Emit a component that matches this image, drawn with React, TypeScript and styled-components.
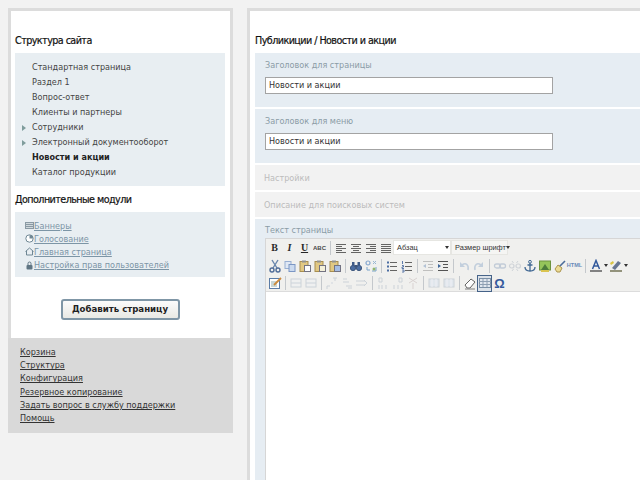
import React from 'react';
import styled, { createGlobalStyle } from 'styled-components';

const GlobalStyle = createGlobalStyle`
  html, body { margin: 0; padding: 0; height: 480px; overflow: hidden; background: #f2f2f2; }
  body { font-family: "DejaVu Sans", Verdana, sans-serif; font-size: 8.1px; color: #333; }
`;

const Page = styled.div`
  display: flex;
  gap: 14px;
  width: 640px;
  height: 480px;
  padding: 8px 0 0 8px;
  box-sizing: border-box;
  overflow: hidden;
`;

const Sidebar = styled.div`
  width: 225px;
  flex: none;
`;

const SidePanel = styled.div`
  height: 330px;
  box-sizing: border-box;
  background: #fff;
  border: solid #dcdcdc;
  border-width: 3px 3px 0 3px;
  padding: 23px 5px 0 4px;
`;

const Heading = styled.h2`
  margin: 0;
  height: 19px;
  line-height: 14px;
  font-size: 9.6px;
  font-weight: normal;
  color: #111;
  letter-spacing: -0.55px;
  -webkit-text-stroke: 0.2px #111;
`;

const TreeBox = styled.div`
  background: #e8eef2;
  padding: 7px 0 6px 17px;
  margin-bottom: 7px;
`;

const TreeRow = styled.div<{ $active?: boolean; $arrow?: boolean }>`
  position: relative;
  height: 15px;
  line-height: 15px;
  font-weight: ${p => (p.$active ? 'bold' : 'normal')};
  color: ${p => (p.$active ? '#222' : '#444')};
  &::before {
    content: '';
    display: ${p => (p.$arrow ? 'block' : 'none')};
    position: absolute;
    left: -10px;
    top: 5px;
    border-left: 4px solid #7f9c9c;
    border-top: 3px solid transparent;
    border-bottom: 3px solid transparent;
  }
`;

const ModulesBox = styled.div`
  background: #e8eef2;
  margin-top: 0;
  padding: 7px 0 5px 10px;
`;

const ModuleRow = styled.div`
  display: flex;
  align-items: center;
  height: 13.2px;
`;

const ModuleLink = styled.a`
  color: #7c95a6;
  text-decoration: underline;
`;

const ButtonRow = styled.div`
  display: flex;
  justify-content: center;
  margin-top: 22px;
`;

const AddButton = styled.button`
  width: 119px;
  height: 21px;
  padding: 0;
  box-sizing: border-box;
  border: 2px solid #7f96a6;
  border-radius: 3px;
  background: linear-gradient(#fbfbfb, #e9e9e4);
  font-family: inherit;
  font-size: 8.6px;
  font-weight: bold;
  color: #222;
`;

const SideFooter = styled.div`
  height: 95px;
  box-sizing: border-box;
  background: #d9d9d9;
  padding: 8px 0 0 12px;
`;

const FooterLink = styled.a`
  display: block;
  height: 13.2px;
  line-height: 13px;
  color: #333;
  text-decoration: underline;
`;

const Main = styled.div`
  flex: none;
  width: 420px;
  height: 480px;
  box-sizing: border-box;
  background: #fff;
  border: solid #dcdcdc;
  border-width: 3px 0 0 3px;
  padding: 23px 0 0 5px;
`;

const Section = styled.div<{ $h: number; $muted?: boolean }>`
  height: ${p => p.$h}px;
  box-sizing: border-box;
  margin-bottom: 2px;
  background: ${p => (p.$muted ? '#f2f2f2' : '#e6edf3')};
  padding: ${p => (p.$muted ? '7px 0 0 9px' : '6px 0 0 10px')};
`;

const EditorSection = styled(Section)`
  padding-top: 5px;
`;

const Label = styled.div<{ $muted?: boolean }>`
  height: 12px;
  line-height: 12px;
  color: ${p => (p.$muted ? '#bcbcbc' : '#8b9ca6')};
`;

const TextInput = styled.div`
  width: 288px;
  height: 17px;
  margin-top: 6px;
  box-sizing: border-box;
  border: 1px solid #a3a3a3;
  background: #fff;
  padding-left: 3px;
  line-height: 15px;
  color: #333;
`;

const Editor = styled.div`
  margin-top: 2px;
  width: 380px;
  height: 260px;
  border: 1px solid #d6d6d6;
  border-right: 0;
  background: #fff;
`;

const Toolbar = styled.div`
  height: 52px;
  background: #f0f0ee;
  border-bottom: 1px solid #dcdcdc;
  padding-left: 1px;
`;

const ToolRow = styled.div`
  display: flex;
  align-items: center;
  height: 17.7px;
`;

const ToolButton = styled.span<{ $active?: boolean; $off?: boolean }>`
  position: relative;
  width: 15px;
  height: 15px;
  flex: none;
  display: flex;
  align-items: center;
  justify-content: center;
  opacity: ${p => (p.$off ? 0.4 : 0.9)};
  &::after {
    content: '';
    display: ${p => (p.$active ? 'block' : 'none')};
    position: absolute;
    inset: -1px 0;
    border: 1px solid #35557f;
    background: rgba(178, 198, 224, 0.35);
  }
`;

const ToolSep = styled.span`
  width: 1px;
  height: 14px;
  margin: 0 2.5px;
  flex: none;
  background: #c4c8cc;
`;

const ToolSelect = styled.span<{ $w: number; $grey?: boolean }>`
  display: flex;
  align-items: center;
  justify-content: space-between;
  width: ${p => p.$w}px;
  height: 15px;
  box-sizing: border-box;
  flex: none;
  padding: 0 1px 0 3px;
  background: ${p => (p.$grey ? '#f5f5f3' : '#fff')};
  border: 1px solid #e6e6e2;
  font-family: "Liberation Sans", Arial, sans-serif;
  font-size: 7.4px;
  color: #333;
  white-space: nowrap;
`;

const Caret = styled.span`
  width: 0;
  height: 0;
  flex: none;
  border-top: 3px solid #333;
  border-left: 2.5px solid transparent;
  border-right: 2.5px solid transparent;
`;

const ArrowBtn = styled.span`
  width: 5px;
  flex: none;
  display: flex;
  justify-content: center;
`;

const Glyph = styled.span<{ $serif?: boolean; $italic?: boolean; $under?: boolean; $c?: string; $s?: number }>`
  font-family: ${p => (p.$serif ? '"Liberation Serif", serif' : '"Liberation Sans", sans-serif')};
  font-size: ${p => p.$s ?? 10}px;
  font-weight: bold;
  font-style: ${p => (p.$italic ? 'italic' : 'normal')};
  text-decoration: ${p => (p.$under ? 'underline' : 'none')};
  color: ${p => p.$c ?? '#111'};
  line-height: 1;
`;

const Svg = ({ children }: { children: React.ReactNode }) => (
  <svg width="14" height="14" viewBox="0 0 14 14" fill="none" style={{ position: 'relative', zIndex: 1 }}>
    {children}
  </svg>
);

const lines = (rows: [number, number, number][], color: string, w = 1) =>
  rows.map(([x1, x2, y], i) => <line key={i} x1={x1} x2={x2} y1={y} y2={y} stroke={color} strokeWidth={w} />);

const alignIcon = (kind: string) => {
  const rows: [number, number, number][] = [];
  for (let i = 0; i < 5; i++) {
    const y = 3 + i * 2 + 0.5;
    const short = i % 2 === 1;
    if (kind === 'full' || !short) rows.push([2, 12, y]);
    else if (kind === 'left') rows.push([2, 8, y]);
    else if (kind === 'center') rows.push([4, 10, y]);
    else rows.push([6, 12, y]);
  }
  return <Svg>{lines(rows, '#555')}</Svg>;
};

const Paste = ({ doc }: { doc: string }) => (
  <Svg>
    <rect x="2" y="2.5" width="8" height="10" fill="#e0c478" stroke="#a08440" />
    <rect x="4" y="1.5" width="4" height="2" fill="#888" />
    <rect x="6.5" y="6.5" width="6" height="6" fill={doc} stroke="#667" />
  </Svg>
);

const icons: Record<string, React.ReactNode> = {
  left: alignIcon('left'),
  center: alignIcon('center'),
  right: alignIcon('right'),
  full: alignIcon('full'),
  cut: (
    <Svg>
      <path d="M4 1l5 8M10 1L5 9" stroke="#5a7aa6" strokeWidth="1.4" />
      <circle cx="4" cy="11" r="2" stroke="#3f5f90" strokeWidth="1.4" />
      <circle cx="10" cy="11" r="2" stroke="#3f5f90" strokeWidth="1.4" />
    </Svg>
  ),
  copy: (
    <Svg>
      <rect x="2" y="2.5" width="6" height="7" fill="#dfe8f5" stroke="#8fa9d0" />
      <rect x="6" y="5.5" width="6" height="7" fill="#c8d8f0" stroke="#6f8dc0" />
    </Svg>
  ),
  paste: <Paste doc="#fff" />,
  pasteText: <Paste doc="#f4f0d8" />,
  pasteWord: <Paste doc="#9db8e4" />,
  find: (
    <Svg>
      <circle cx="4" cy="9" r="2.6" fill="#3a5f9a" stroke="#2a4570" />
      <circle cx="10" cy="9" r="2.6" fill="#3a5f9a" stroke="#2a4570" />
      <rect x="3" y="3" width="2.5" height="4" fill="#2b4a7c" />
      <rect x="8.5" y="3" width="2.5" height="4" fill="#2b4a7c" />
      <rect x="5.5" y="6" width="3" height="2" fill="#2a4570" />
    </Svg>
  ),
  replace: (
    <Svg>
      <circle cx="4" cy="4" r="2" stroke="#7aa0cc" strokeWidth="1.2" />
      <path d="M9 2l3 3M12 2L9 5" stroke="#8fb0d0" />
      <path d="M3 8v3h3M8 12h4V8" stroke="#6f9cc8" />
      <circle cx="10" cy="10" r="1.5" fill="#88b060" />
    </Svg>
  ),
  ul: (
    <Svg>
      {lines([[5, 12, 3.5], [5, 12, 7.5], [5, 12, 11.5]], '#555')}
      {lines([[2, 4, 3.5], [2, 4, 7.5], [2, 4, 11.5]], '#3a5f9a', 2)}
    </Svg>
  ),
  ol: (
    <Svg>
      {lines([[5, 12, 3.5], [5, 12, 7.5], [5, 12, 11.5]], '#555')}
      <path d="M2.5 2v3M2 6.5h1.5v1.5H2v1.5h2M2 11h2v2H2" stroke="#3a5f9a" strokeWidth="0.9" />
    </Svg>
  ),
  outdent: (
    <Svg>
      {lines([[2, 12, 2.5], [7, 12, 5.5], [7, 12, 8.5], [2, 12, 11.5]], '#777')}
      <path d="M5 5v4L2 7z" fill="#5a7fb0" />
    </Svg>
  ),
  indent: (
    <Svg>
      {lines([[2, 12, 2.5], [7, 12, 5.5], [7, 12, 8.5], [2, 12, 11.5]], '#444')}
      <path d="M2 5v4l3-2z" fill="#2f5a90" />
    </Svg>
  ),
  undo: (
    <Svg>
      <path d="M5 6c4-3 7 0 6 5" stroke="#7f9fc4" strokeWidth="1.6" />
      <path d="M3 3v5h5z" fill="#7f9fc4" />
    </Svg>
  ),
  redo: (
    <Svg>
      <path d="M9 6c-4-3-7 0-6 5" stroke="#7f9fc4" strokeWidth="1.6" />
      <path d="M11 3v5H6z" fill="#7f9fc4" />
    </Svg>
  ),
  link: (
    <Svg>
      <rect x="1.5" y="5" width="6" height="4" rx="2" stroke="#8098b8" strokeWidth="1.3" />
      <rect x="6.5" y="5" width="6" height="4" rx="2" stroke="#8098b8" strokeWidth="1.3" />
    </Svg>
  ),
  unlink: (
    <Svg>
      <rect x="1.5" y="5" width="4.5" height="4" rx="2" stroke="#a0aab8" strokeWidth="1.2" />
      <rect x="8" y="5" width="4.5" height="4" rx="2" stroke="#a0aab8" strokeWidth="1.2" />
      <path d="M4 2l1.5 2M10 2L8.500 4M4 12l1.5-2M10 12l-1.5-2" stroke="#a0aab8" />
    </Svg>
  ),
  anchor: (
    <Svg>
      <circle cx="7" cy="2.8" r="1.4" stroke="#2f5a8a" />
      <path d="M7 4v8M4.5 6h5M2 8c0 3 2.5 4 5 4s5-1 5-4" stroke="#2f5a8a" strokeWidth="1.3" />
    </Svg>
  ),
  image: (
    <Svg>
      <rect x="1.5" y="2" width="11" height="9" fill="#8cc04a" stroke="#5e8a2c" />
      <path d="M3 11l4-6 4 6z" fill="#3c7028" />
      <rect x="3" y="11" width="8" height="2" fill="#d8c040" />
    </Svg>
  ),
  clean: (
    <Svg>
      <path d="M6 8l6-6" stroke="#3c5f90" strokeWidth="1.6" />
      <path d="M2 10l3-4 4 3-2 4H4z" fill="#ecd98a" stroke="#a68b3c" />
    </Svg>
  ),
  html: <Glyph $c="#5a7eb4" $s={5.5}>HTML</Glyph>,
  color: (
    <Svg>
      <path d="M3.5 10L7 1.5 10.500 10M5 7h4" stroke="#1f4a94" strokeWidth="1.5" />
      <rect x="1" y="11" width="12" height="2" fill="#777" />
    </Svg>
  ),
  highlight: (
    <Svg>
      <path d="M3 9l6-7 3 2-6 7z" fill="#5a6a88" />
      <path d="M1 4l3-2 1 2-3 2z" fill="#d8c030" />
      <rect x="1" y="11" width="12" height="2" fill="#8a8a70" />
    </Svg>
  ),
  edit: (
    <Svg>
      <rect x="1.500" y="2.500" width="10" height="10" fill="#fff" stroke="#4a70a0" />
      {lines([[3, 9, 6], [3, 9, 8], [3, 9, 10]], '#8aa')}
      <path d="M6 9l7-7" stroke="#c8802c" strokeWidth="1.8" />
    </Svg>
  ),
  rowA: (
    <Svg>
      <rect x="2" y="3" width="10" height="8" fill="#eef1f5" stroke="#9ab" />
      <line x1="2" x2="12" y1="7" y2="7" stroke="#9ab" />
    </Svg>
  ),
  cellA: (
    <Svg>
      <path d="M2 10v3M2 10h3" stroke="#9ab" />
      <path d="M8 2h4M10 2v3" stroke="#9ab" />
      <circle cx="7" cy="7" r="1" fill="#bcc8d4" />
    </Svg>
  ),
  cellB: (
    <Svg>
      <path d="M3 3h4M3 6h6M6 10h6M8 12h4" stroke="#9ab" />
    </Svg>
  ),
  cellC: (
    <Svg>
      <path d="M1 5h9M1 9h9M9 4l3 3-3 3" stroke="#9ab" />
    </Svg>
  ),
  colA: (
    <Svg>
      <path d="M3 2h3v4H3zM3 9v4M6 9v4M10 9v4" stroke="#9ab" />
    </Svg>
  ),
  colB: (
    <Svg>
      <path d="M8 2h3v4H8zM3 9v4M7 9v4M11 9v4" stroke="#9ab" />
    </Svg>
  ),
  colC: (
    <Svg>
      <path d="M3 2l8 5M11 2L3 7M7 7v6" stroke="#b9a9a9" />
    </Svg>
  ),
  tableA: (
    <Svg>
      <rect x="2" y="3" width="10" height="8" fill="#ccdbec" stroke="#9ab" />
      <path d="M5 3v8M9 3v8" stroke="#eef" />
    </Svg>
  ),
  eraser: (
    <Svg>
      <path d="M2 9l6-6 4 3-5 6H4z" fill="#fff" stroke="#555" />
      <path d="M2 13h10" stroke="#777" />
    </Svg>
  ),
  table: (
    <Svg>
      <rect x="1.500" y="2.500" width="11" height="9" fill="#dfe6ef" stroke="#6f86a0" />
      <path d="M1 5.500h12M1 8.500h12M5 3v8M9 3v8" stroke="#8497ad" />
    </Svg>
  ),
  omega: <Glyph $c="#1f4a94" $s={13}>Ω</Glyph>,
};

const Tool = ({ name, off, active }: { name: string; off?: boolean; active?: boolean }) => (
  <ToolButton $off={off} $active={active}>{icons[name]}</ToolButton>
);

const treeItems = [
  { text: 'Стандартная страница' },
  { text: 'Раздел 1' },
  { text: 'Вопрос-ответ' },
  { text: 'Клиенты и партнеры' },
  { text: 'Сотрудники', arrow: true },
  { text: 'Электронный документооборот', arrow: true },
  { text: 'Новости и акции', active: true },
  { text: 'Каталог продукции' },
];

const moduleIcons = [
  <svg key="b" width="9" height="9" viewBox="0 0 9 9" fill="none"><rect x="0.5" y="1.500" width="8" height="6" fill="#d0d8dc" stroke="#8a9aa4" /><path d="M0 3.500h9M0 5.500h9" stroke="#8a9aa4" /></svg>,
  <svg key="v" width="9" height="9" viewBox="0 0 9 9" fill="none"><circle cx="4.500" cy="4.500" r="3.700" fill="#fff" stroke="#6f8794" /><path d="M4.500 4.500V1a3.500 3.500 0 0 1 3.500 3.500z" fill="#6f8794" /></svg>,
  <svg key="h" width="9" height="9" viewBox="0 0 9 9" fill="none"><path d="M0.500 4.500L4.500 1l4 3.500M1.500 4v4h6V4" stroke="#6f8794" /></svg>,
  <svg key="l" width="9" height="9" viewBox="0 0 9 9" fill="none"><rect x="1.500" y="4" width="6" height="4.500" rx="1" fill="#5f7583" /><path d="M3 4V2.500a1.500 1.500 0 0 1 3 0V4" stroke="#5f7583" /></svg>,
];

const modules = ['Баннеры', 'Голосование', 'Главная страница', 'Настройка прав пользователей'];
const footerLinks = ['Корзина', 'Структура', 'Конфигурация', 'Резервное копирование', 'Задать вопрос в службу поддержки', 'Помощь'];

const App = () => {
  return (
    <>
      <GlobalStyle />
      <Page>
        <Sidebar>
          <SidePanel>
            <Heading>Структура сайта</Heading>
            <TreeBox>
              {treeItems.map(item => (
                <TreeRow key={item.text} $active={item.active} $arrow={item.arrow}>{item.text}</TreeRow>
              ))}
            </TreeBox>
            <Heading>Дополнительные модули</Heading>
            <ModulesBox>
              {modules.map((m, i) => (
                <ModuleRow key={m}>
                  {moduleIcons[i]}
                  <ModuleLink>{m}</ModuleLink>
                </ModuleRow>
              ))}
            </ModulesBox>
            <ButtonRow>
              <AddButton>Добавить страницу</AddButton>
            </ButtonRow>
          </SidePanel>
          <SideFooter>
            {footerLinks.map(l => (
              <FooterLink key={l}>{l}</FooterLink>
            ))}
          </SideFooter>
        </Sidebar>
        <Main>
          <Heading>Публикиции / Новости и акции</Heading>
          <Section $h={54}>
            <Label>Заголовок для страницы</Label>
            <TextInput>Новости и акции</TextInput>
          </Section>
          <Section $h={54}>
            <Label>Заголовок для меню</Label>
            <TextInput>Новости и акции</TextInput>
          </Section>
          <Section $h={25} $muted>
            <Label $muted>Настройки</Label>
          </Section>
          <Section $h={25} $muted>
            <Label $muted>Описание для поисковых систем</Label>
          </Section>
          <EditorSection $h={270}>
            <Label>Текст страницы</Label>
            <Editor>
              <Toolbar>
                <ToolRow>
                  <ToolButton><Glyph $serif>B</Glyph></ToolButton>
                  <ToolButton><Glyph $serif $italic>I</Glyph></ToolButton>
                  <ToolButton><Glyph $serif $under>U</Glyph></ToolButton>
                  <ToolButton><Glyph $s={6} $c="#333">ABC</Glyph></ToolButton>
                  <ToolSep />
                  <Tool name="left" />
                  <Tool name="center" />
                  <Tool name="right" />
                  <Tool name="full" />
                  <ToolSelect $w={58}>Абзац<Caret /></ToolSelect>
                  <ToolSelect $w={57} $grey>Размер шрифт<Caret /></ToolSelect>
                </ToolRow>
                <ToolRow>
                  <Tool name="cut" />
                  <Tool name="copy" />
                  <Tool name="paste" />
                  <Tool name="pasteText" />
                  <Tool name="pasteWord" />
                  <ToolSep />
                  <Tool name="find" />
                  <Tool name="replace" />
                  <ToolSep />
                  <Tool name="ul" />
                  <Tool name="ol" />
                  <ToolSep />
                  <Tool name="outdent" off />
                  <Tool name="indent" />
                  <ToolSep />
                  <Tool name="undo" off />
                  <Tool name="redo" off />
                  <ToolSep />
                  <Tool name="link" off />
                  <Tool name="unlink" off />
                  <Tool name="anchor" />
                  <Tool name="image" />
                  <Tool name="clean" />
                  <Tool name="html" />
                  <ToolSep />
                  <Tool name="color" />
                  <ArrowBtn><Caret /></ArrowBtn>
                  <Tool name="highlight" />
                  <ArrowBtn><Caret /></ArrowBtn>
                </ToolRow>
                <ToolRow>
                  <Tool name="edit" />
                  <ToolSep />
                  <Tool name="rowA" off />
                  <Tool name="rowA" off />
                  <ToolSep />
                  <Tool name="cellA" off />
                  <Tool name="cellB" off />
                  <Tool name="cellC" off />
                  <ToolSep />
                  <Tool name="colA" off />
                  <Tool name="colB" off />
                  <Tool name="colC" off />
                  <ToolSep />
                  <Tool name="tableA" off />
                  <Tool name="tableA" off />
                  <ToolSep />
                  <Tool name="eraser" />
                  <Tool name="table" active />
                  <Tool name="omega" />
                </ToolRow>
              </Toolbar>
            </Editor>
          </EditorSection>
        </Main>
      </Page>
    </>
  );
};

export default App;
